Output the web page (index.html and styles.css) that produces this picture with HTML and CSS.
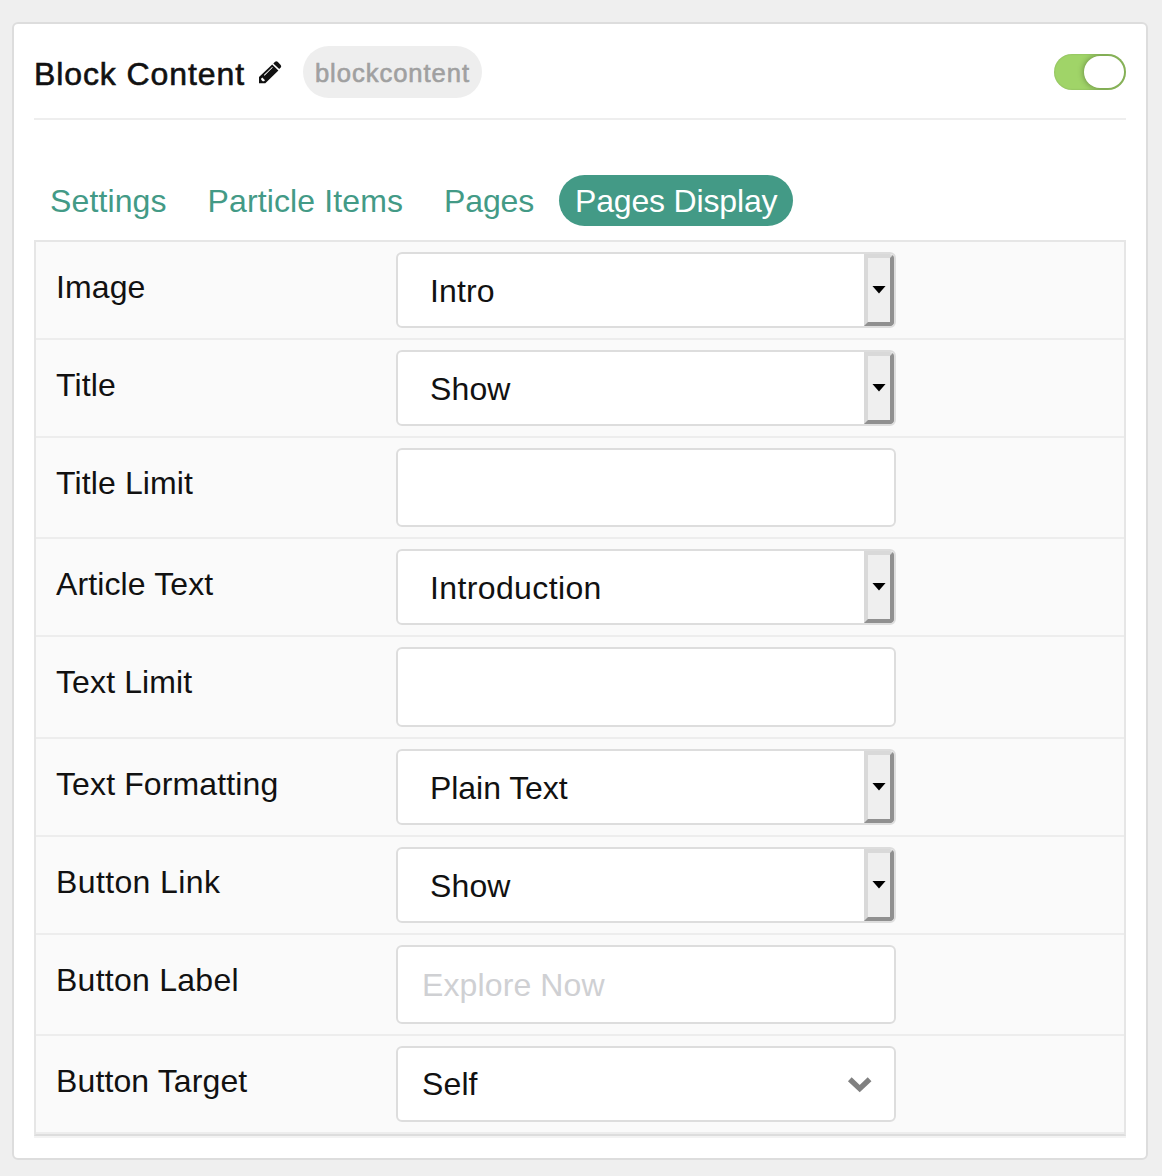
FILE: index.html
```html
<!DOCTYPE html>
<html lang="en">
<head>
<meta charset="utf-8">
<title>Block Content</title>
<link rel="stylesheet" href="styles.css">
</head>
<body>
<main class="card">
  <header class="card-header">
    <h4 class="card-title">Block Content</h4>
    <svg class="pencil" width="24" height="24" viewBox="0 0 24 24" aria-hidden="true">
      <path fill="#111" fill-rule="evenodd" d="M1 16 14.2 3.4 20.4 9.4 7.3 22.2H1Z M3.2 17.6V18.7L4.7 20.2H6L7 19.2 4.3 16.5Z M5.9 14.1 6.5 14.7 14.8 6.6 14.2 6Z"/>
      <path fill="#111" d="M15.3 2.4 17.1.7Q18.3-.3 19.6.8L22.7 3.9Q23.8 5.2 22.7 6.4L21.2 8Z"/>
    </svg>
    <span class="badge">blockcontent</span>
    <span class="toggle"><span class="knob"></span></span>
  </header>
  <nav class="tabs">
    <a class="tab">Settings</a>
    <a class="tab">Particle Items</a>
    <a class="tab tight">Pages</a>
    <a class="tab tight active">Pages Display</a>
  </nav>
  <section class="panel">
    <div class="row"><label class="label">Image</label><div class="field select"><span>Intro</span><i class="arrow"></i></div></div>
    <div class="row"><label class="label">Title</label><div class="field select"><span>Show</span><i class="arrow"></i></div></div>
    <div class="row"><label class="label">Title Limit</label><div class="field input"></div></div>
    <div class="row"><label class="label">Article Text</label><div class="field select"><span class="wide">Introduction</span><i class="arrow"></i></div></div>
    <div class="row"><label class="label">Text Limit</label><div class="field input tall"></div></div>
    <div class="row"><label class="label">Text Formatting</label><div class="field select"><span class="snug">Plain Text</span><i class="arrow"></i></div></div>
    <div class="row"><label class="label wide">Button Link</label><div class="field select"><span>Show</span><i class="arrow"></i></div></div>
    <div class="row"><label class="label roomy">Button Label</label><div class="field input"><span class="placeholder">Explore Now</span></div></div>
    <div class="row"><label class="label">Button Target</label><div class="field dropdown"><span>Self</span>
      <svg class="chevron" width="24" height="16" viewBox="0 0 24 16" aria-hidden="true"><path d="M1.8 2.2 11.7 11.6 21.6 2.2" fill="none" stroke="#808080" stroke-width="5.4"/></svg></div></div>
  </section>
</main>
</body>
</html>
```
FILE: styles.css
```css
* { box-sizing: border-box; }
body {
  margin: 0;
  padding: 22px 14px 16px 12px;
  background: #efefef;
  color: #111;
  font: 32px/48px "Liberation Sans", Arial, sans-serif;
  letter-spacing: 0.12px;
  white-space: nowrap;
}
.card {
  height: 1138px;
  padding: 0 20px;
  background: #fff;
  border: 2px solid #ddd;
  border-radius: 6px;
}
.card-header {
  display: flex;
  align-items: center;
  height: 96px;
  border-bottom: 2px solid #eee;
}
.card-title {
  width: 223px;
  margin: 5px 0 0;
  font-size: 32px;
  font-weight: 400;
  letter-spacing: 0.9px;
  -webkit-text-stroke: 0.6px #111;
}
.pencil { margin: 3px 0 0 1px; overflow: visible; }
.badge {
  width: 179px;
  height: 52px;
  margin: 2px 0 0 21px;
  border-radius: 26px;
  background: #eee;
  color: #a0a0a0;
  font-size: 25.6px;
  line-height: 54px;
  letter-spacing: 0.95px;
  text-align: center;
  -webkit-text-stroke: 0.6px #a0a0a0;
}
.toggle {
  display: flex;
  justify-content: flex-end;
  width: 72px;
  height: 36px;
  margin: 2px 0 0 auto;
  padding: 2px;
  border-radius: 18px;
  background: #a0d468;
  box-shadow: inset 0 0 2px rgba(0, 0, 0, 0.18);
  overflow: hidden;
}
.knob {
  width: 40px;
  height: 32px;
  border-radius: 16px;
  background: #fff;
  box-shadow: 0 0 6px rgba(0, 0, 0, 0.4);
}
.tabs {
  display: flex;
  gap: 9px;
  height: 120px;
  padding-top: 55px;
}
.tab {
  height: 51px;
  padding: 0 16px;
  border-radius: 26px;
  color: #439a86;
  line-height: 52px;
}
.tight { letter-spacing: -0.17px; }
.active { background: #439a86; color: #fff; }
.panel {
  background: #fafafa;
  border: 2px solid #e6e6e6;
  border-bottom-color: #ddd;
  box-shadow: 0 2px 0 #f3f3f3;
}
.row {
  display: flex;
  padding: 10px 0 10px 20px;
  border-bottom: 2px solid #ededed;
}
.label { width: 340px; padding-top: 11px; }
.wide { letter-spacing: 0.38px; }
.roomy { letter-spacing: 0.26px; }
.snug { letter-spacing: -0.05px; }
.field {
  display: flex;
  justify-content: space-between;
  width: 500px;
  height: 76px;
  padding-left: 24px;
  background: #fff;
  border: 2px solid #ddd;
  border-radius: 6px;
  line-height: 75px;
}
.select { padding-left: 32px; overflow: hidden; }
.dropdown { line-height: 73px; }
.arrow {
  display: flex;
  align-items: center;
  justify-content: center;
  width: 30px;
  height: 72px;
  background: #efefef;
  border: 4px solid;
  border-color: #d9d9d9 #909090 #909090 #d9d9d9;
  border-radius: 0 4px 4px 0;
}
.arrow::before {
  content: "";
  width: 14px;
  height: 8px;
  margin-bottom: 1px;
  background: #000;
  clip-path: polygon(0 0, 100% 0, 50% 100%);
}
.input { height: 79px; line-height: 77px; }
.tall { height: 80px; }
.placeholder { color: #cfd0d3; }
.chevron { margin: 29px 22px 0 0; overflow: visible; }
```
